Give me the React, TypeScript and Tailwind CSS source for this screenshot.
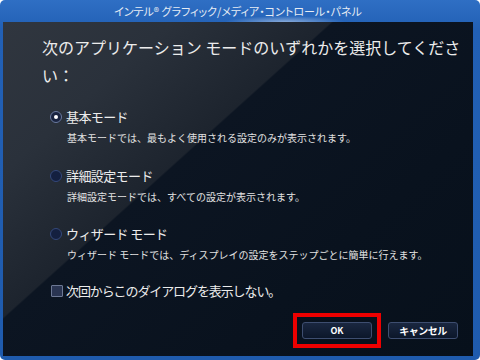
import React from "react";

function Radio({ checked }: { checked?: boolean }) {
  return checked ? (
    <span className="w-[12px] h-[12px] rounded-full border border-[#6a7aa0] bg-[#1a2440] flex items-center justify-center shrink-0">
      <span className="w-[4px] h-[4px] rounded-full bg-white" />
    </span>
  ) : (
    <span className="w-[12px] h-[12px] rounded-full border border-[#34487a] bg-[#142040] shrink-0" />
  );
}

function Option({ label, desc, checked, className }: { label: string; desc: string; checked?: boolean; className?: string }) {
  return (
    <div className={className}>
      <div className="flex items-center h-[18px] pl-[8px] gap-[4px]">
        <Radio checked={checked} />
        <span className="text-[13px] tracking-[-0.6px] leading-[18px] text-[#ececec]">{label}</span>
      </div>
      <div className="mt-[5px] pl-[25px] text-[10px] leading-[14px] text-[#e2e2e2]">{desc}</div>
    </div>
  );
}

export default function App() {
  return (
    <div className="w-[480px] h-[360px] rounded-[5px] bg-[linear-gradient(180deg,#2f6fc4_0%,#2260b5_8%,#1f5bad_100%)] pl-[3px] pr-[7px] pb-[4px] flex flex-col font-['Noto_Sans_CJK_JP',sans-serif]">
      <div className="h-[22px] flex items-center justify-center text-[11px] text-[#e6ecf4] [font-feature-settings:'palt'] bg-[radial-gradient(ellipse_60px_6px_at_282px_22px,rgba(255,255,255,0.45),transparent)]">
        インテル® グラフィック/メディア・コントロール・パネル
      </div>
      <div className="flex-1 flex flex-col pl-[39px] bg-[linear-gradient(138deg,#30363f_0%,#2a313b_20%,#1d242e_39%,#0c1522_39.3%,#09121e_70%,#07101b_100%)]">
        <div className="mt-[11px] w-[424px] text-[16px] leading-[28px] text-[#ececec]">
          次のアプリケーション モードのいずれかを選択してください：
        </div>
        <Option className="mt-[19px]" checked label="基本モード" desc="基本モードでは、最もよく使用される設定のみが表示されます。" />
        <Option className="mt-[22px]" label="詳細設定モード" desc="詳細設定モードでは、すべての設定が表示されます。" />
        <Option className="mt-[21px]" label="ウィザード モード" desc="ウィザード モードでは、ディスプレイの設定をステップごとに簡単に行えます。" />
        <div className="mt-[20px] flex items-center h-[18px] pl-[9px] gap-[3px]">
          <span className="w-[12px] h-[12px] rounded-[1px] border border-[#6c7894] bg-[#2a3552] shrink-0" />
          <span className="text-[13px] tracking-[-1.1px] leading-[18px] text-[#ececec]">次回からこのダイアログを表示しない。</span>
        </div>
        <div className="mt-[13px] flex items-center justify-end pr-[15px] gap-[7px]">
          <div className="border-[4px] border-[#ee0000] p-[5px]">
            <button className="w-[70px] h-[17px] rounded-[3px] border border-[#3e4e70] bg-[linear-gradient(180deg,#1a2740,#0c172a)] text-white text-[9px] font-bold flex items-center justify-center">
              OK
            </button>
          </div>
          <button className="w-[70px] h-[17px] rounded-[3px] border border-[#3e4e70] bg-[linear-gradient(180deg,#1a2740,#0c172a)] text-white text-[10px] font-bold tracking-[-0.5px] flex items-center justify-center">
            キャンセル
          </button>
        </div>
      </div>
    </div>
  );
}
